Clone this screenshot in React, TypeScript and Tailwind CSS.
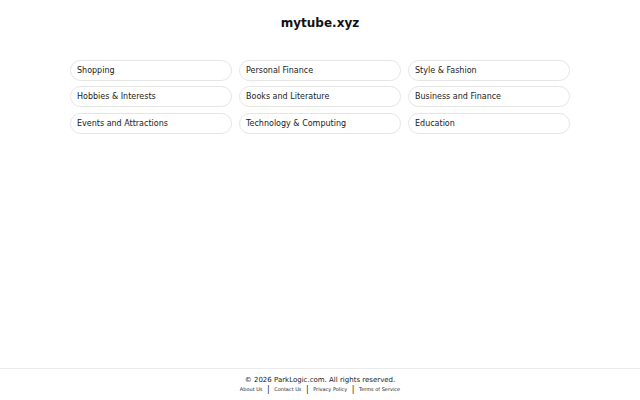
import React from "react";

const items = [
  "Shopping",
  "Personal Finance",
  "Style & Fashion",
  "Hobbies & Interests",
  "Books and Literature",
  "Business and Finance",
  "Events and Attractions",
  "Technology & Computing",
  "Education",
];

const links = ["About Us", "Contact Us", "Privacy Policy", "Terms of Service"];

export default function App() {
  return (
    <div
      className="min-h-screen flex flex-col bg-white text-[#222]"
      style={{ fontFamily: '"DejaVu Sans", sans-serif' }}
    >
      <header className="pt-[15px] text-center">
        <h1 className="text-[12px] leading-[16px] font-bold text-[#111]">mytube.xyz</h1>
      </header>
      <main className="flex-1 flex justify-center pt-[28.5px]">
        <div className="grid grid-cols-3 w-[500px] gap-x-[7px] gap-y-[5.5px] self-start">
          {items.map((t) => (
            <a
              key={t}
              href="#"
              className="h-[21px] rounded-full border border-[#e5e5e5] flex items-center pl-[6px] pt-[1px] text-[8px] text-[#1a1a1a] bg-white"
            >
              {t}
            </a>
          ))}
        </div>
      </main>
      <footer className="h-[32px] border-t border-[#ececec] pt-[7px] text-center">
        <p className="text-[7px] leading-[9px] text-[#222]">© 2026 ParkLogic.com. All rights reserved.</p>
        <div className="flex justify-center items-center text-[5px] leading-[9px] text-[#222]">
          {links.map((l, i) => (
            <React.Fragment key={l}>
              {i > 0 && <span className="mx-[4.5px] text-[8px] leading-[9px] text-[#222]">|</span>}
              <a href="#">{l}</a>
            </React.Fragment>
          ))}
        </div>
      </footer>
    </div>
  );
}
